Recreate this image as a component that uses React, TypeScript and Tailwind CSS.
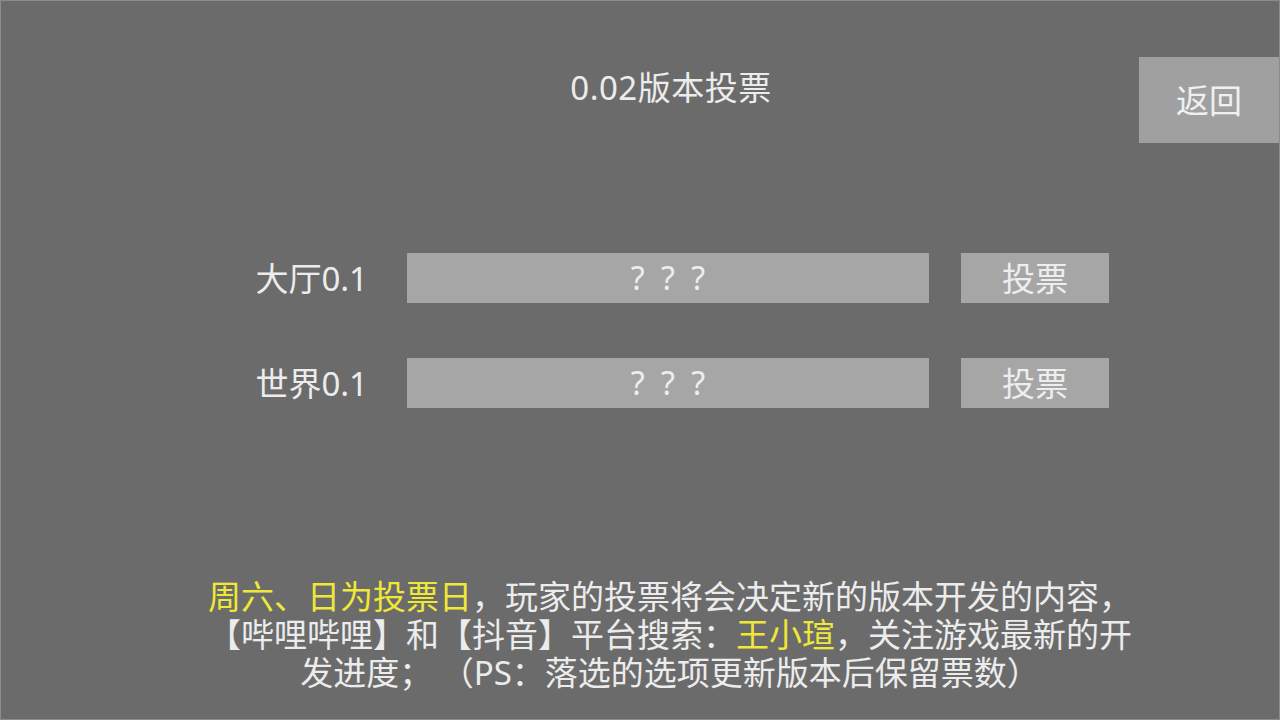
import React from "react";

const font = { fontFamily: '"Noto Sans", "Noto Sans CJK SC", sans-serif' };

function Row({ label }: { label: string }) {
  return (
    <div className="flex items-center h-[50px]">
      <div className="w-[367px] text-right text-[33px] leading-none text-[#ececec]">{label}</div>
      <div className="ml-[39px] w-[522px] h-[50px] bg-[#a6a6a6] flex items-center justify-center text-[32px] leading-none text-[#eeeeee] whitespace-pre tracking-[4px] pl-[4px]">
        {"? ? ?"}
      </div>
      <div className="ml-[32px] w-[148px] h-[50px] bg-[#a6a6a6] flex items-center justify-center text-[33px] leading-none text-[#eeeeee]">
        投票
      </div>
    </div>
  );
}

export default function App() {
  return (
    <div
      style={font}
      className="w-[1280px] h-[720px] bg-[#6b6b6b] border border-[#8c8c8c] flex flex-col overflow-hidden"
    >
      <div className="flex h-[200px]">
        <div className="flex-1 pt-[68px] text-center text-[33px] leading-[38px] text-[#ececec] pl-[202px] tracking-[0.5px]">
          0.02版本投票
        </div>
        <div className="mt-[56px] w-[140px] h-[86px] bg-[#a0a0a0] flex items-center justify-center text-[33px] leading-none text-[#f0f0f0]">
          返回
        </div>
      </div>
      <div className="mt-[52px] flex flex-col gap-[55px]">
        <Row label="大厅0.1" />
        <Row label="世界0.1" />
      </div>
      <div className="mt-[170px] text-center text-[33px] leading-[38px] text-[#ececec] pl-[60px] whitespace-pre">
        <div>
          <span className="text-[#efe836]">周六、日为投票日</span>，玩家的投票将会决定新的版本开发的内容，
        </div>
        <div>
          【哔哩哔哩】和【抖音】平台搜索：<span className="text-[#efe836]">王小瑄</span>，关注游戏最新的开
        </div>
        <div>{"发进度； （PS：落选的选项更新版本后保留票数）"}</div>
      </div>
    </div>
  );
}
